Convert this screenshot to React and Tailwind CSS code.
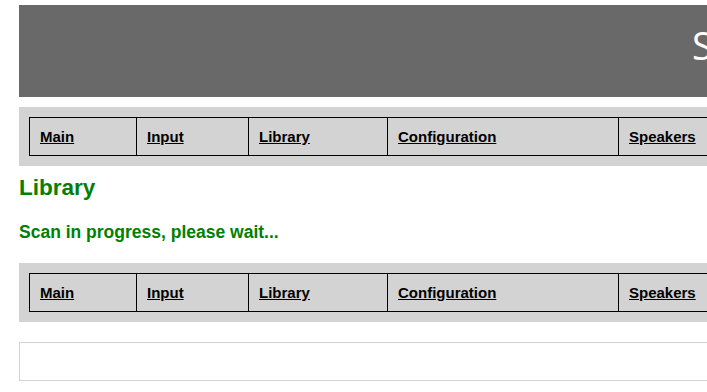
import React from "react";

const items = [
  { label: "Main", w: "w-[107px]" },
  { label: "Input", w: "w-[112px]" },
  { label: "Library", w: "w-[139px]" },
  { label: "Configuration", w: "w-[231px]" },
  { label: "Speakers", w: "w-[140px]" },
];

function Nav() {
  return (
    <div className="bg-[#d3d3d3] py-[10px] pl-[10px]">
      <div className="flex h-[39px] border-y border-l border-black w-max">
        {items.map((it) => (
          <div
            key={it.label}
            className={`${it.w} flex items-center border-r border-black pl-[10px]`}
          >
            <a
              href="#"
              className="text-[15px] leading-[15px] font-bold text-black underline"
            >
              {it.label}
            </a>
          </div>
        ))}
      </div>
    </div>
  );
}

export default function App() {
  return (
    <div
      className="w-full h-[392px] overflow-hidden bg-white"
      style={{ fontFamily: '"Liberation Sans", Arial, sans-serif' }}
    >
      <div className="w-[1400px] pt-[5px] pl-[19px]">
        <div className="bg-[#696969] h-[92px] pt-[21px] pl-[673px]">
          <div
            className="text-white text-[38px] leading-[38px]"
            style={{ fontFamily: '"Open Sans", sans-serif' }}
          >
            Settings
          </div>
        </div>
        <div className="mt-[10px]">
          <Nav />
        </div>
        <h2 className="mt-[11px] text-[22.5px] leading-[22.5px] font-bold text-[#008000]">
          Library
        </h2>
        <p className="mt-[24px] text-[17.5px] leading-[17.5px] font-bold text-[#008000]">
          Scan in progress, please wait...
        </p>
        <div className="mt-[22px]">
          <Nav />
        </div>
        <div className="mt-[20px] h-[39px] border border-[#d3d3d3]"></div>
      </div>
    </div>
  );
}
